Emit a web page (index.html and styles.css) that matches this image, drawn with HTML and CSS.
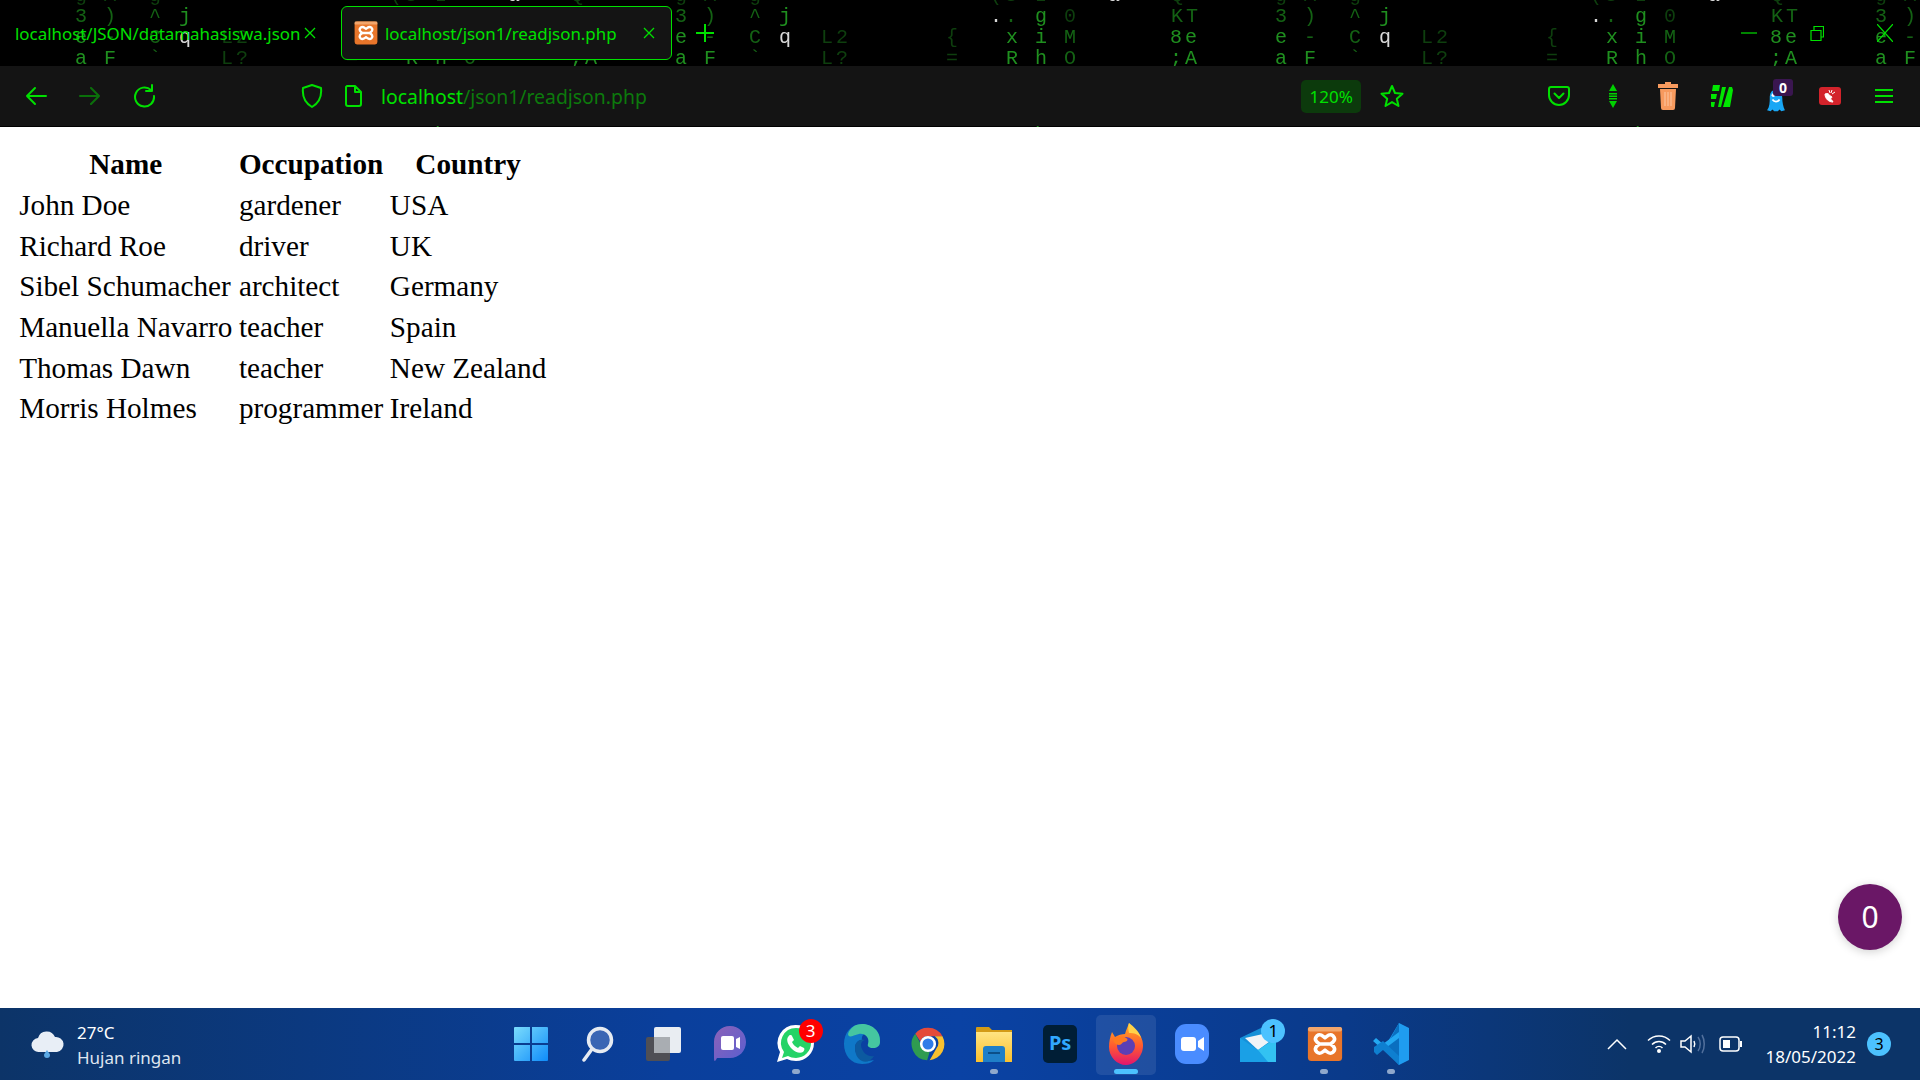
FILE: index.html
```html
<!DOCTYPE html>
<html lang="en">
<head>
    <meta charset="UTF-8">
    <title>localhost/json1/readjson.php</title>
    <link rel="stylesheet" href="styles.css">
</head>
<body>
    <svg class="defs" width="0" height="0">
        <defs>
            <linearGradient id="winGrad" x1="0" y1="0" x2="1" y2="1">
                <stop offset="0" stop-color="#7bdcfc"/>
                <stop offset="1" stop-color="#0f8cfa"/>
            </linearGradient>
            <linearGradient id="folderGrad" x1="0" y1="0" x2="0" y2="1">
                <stop offset="0" stop-color="#ffe482"/>
                <stop offset="1" stop-color="#fbc02d"/>
            </linearGradient>
            <linearGradient id="foxGrad" x1="0" y1="0" x2="0" y2="1">
                <stop offset="0" stop-color="#ffb020"/>
                <stop offset="0.55" stop-color="#ff5a30"/>
                <stop offset="1" stop-color="#e0156f"/>
            </linearGradient>
            <linearGradient id="teamsGrad" x1="0" y1="0" x2="1" y2="1">
                <stop offset="0" stop-color="#8c62b8"/>
                <stop offset="1" stop-color="#5a5fd0"/>
            </linearGradient>
            <symbol id="xampp" viewBox="0 0 40 40">
                <rect x="1" y="1" width="38" height="38" rx="4" fill="#e8752a"/>
                <rect x="1" y="1" width="38" height="5" rx="2" fill="#f2a66c"/>
                <path d="M11 11c4-3 6 0 9 2 3-2 5-5 9-2 4 4 0 7-3 9 3 2 7 5 3 9-4 3-6 0-9-2-3 2-5 5-9 2-4-4 0-7 3-9-3-2-7-5-3-9zM15 20h10" fill="none" stroke="#fff" stroke-width="4"/>
            </symbol>
            <!-- one tile of the wallpaper, repeats every 600px -->
            <g id="matrixTile" class="matrix-text">
                <text class="mx-faint" x="81 110 155 396 411 441 577" y="1">gAg(SIQ</text>
                <text class="mx-white" x="514" y="1">a</text>
                <text class="mx-dim" x="81 110 155 411 577 592" y="22">3)^.KT</text>
                <text class="mx-faint" x="470" y="22">0</text>
                <text class="mx-mid" x="185 441" y="22">jg</text>
                <text class="mx-white" x="396" y="22">.</text>
                <text class="mx-mid" x="81 412 441 576 591" y="43">exi8e</text>
                <text class="mx-dim" x="110 155 470" y="43">-CM</text>
                <text class="mx-faint" x="227 242 352" y="43">L2{</text>
                <text class="mx-white" x="185" y="43">q</text>
                <text class="mx-mid" x="81 110 412 441 576 591" y="64">aFRh;A</text>
                <text class="mx-dim" x="155 470" y="64">`O</text>
                <text class="mx-faint" x="227 242 352" y="64">L?=</text>
                <text class="mx-dim" x="81 110 155 227 242 352" y="141">eFCLL=</text>
                <text class="mx-mid" x="412 441 470 576 591" y="141">RhO;A</text>
            </g>
        </defs>
    </svg>

    <div class="browser">
        <svg class="matrix" width="1920" height="130">
            <use href="#matrixTile"/>
            <use href="#matrixTile" x="600"/>
            <use href="#matrixTile" x="1200"/>
            <use href="#matrixTile" x="1800"/>
        </svg>

        <div class="tabstrip">
            <div class="tab">
                <span class="tab-title">localhost/JSON/datamahasiswa.json</span>
                <svg class="tab-close" width="14" height="14" viewBox="0 0 14 14"><path d="M2 2l10 10M12 2L2 12"/></svg>
            </div>
            <div class="tab tab-active">
                <svg class="tab-icon" width="24" height="24"><use href="#xampp"/></svg>
                <span class="tab-title">localhost/json1/readjson.php</span>
                <svg class="tab-close" width="14" height="14" viewBox="0 0 14 14"><path d="M2 2l10 10M12 2L2 12"/></svg>
            </div>
            <svg class="new-tab" width="18" height="18" viewBox="0 0 18 18"><path d="M9 0v18M0 9h18"/></svg>
            <div class="window-controls">
                <div class="win-btn"><svg width="16" height="2" viewBox="0 0 16 2"><path d="M0 1h16"/></svg></div>
                <div class="win-btn"><svg width="14" height="16" viewBox="0 0 14 16"><path d="M1 5.500h10v10H1zM4 5V1.500h9.500V12H11"/></svg></div>
                <div class="win-btn"><svg width="16" height="18" viewBox="0 0 16 18"><path d="M0 0l16 18M16 0L0 18"/></svg></div>
            </div>
        </div>

        <div class="toolbar">
            <div class="tool-btn"><svg class="line-icon" width="22" height="22" viewBox="0 0 22 22"><path d="M21 11H2M10 3l-8 8 8 8"/></svg></div>
            <div class="tool-btn tool-off"><svg class="line-icon" width="22" height="22" viewBox="0 0 22 22"><path d="M1 11h19M12 3l8 8-8 8"/></svg></div>
            <div class="tool-btn"><svg class="line-icon" width="24" height="24" viewBox="0 0 24 24"><path d="M19 6a9.500 9.500 0 1 0 3 6M20 1v6h-6"/></svg></div>

            <div class="urlbar">
                <svg class="line-icon url-shield" width="22" height="26" viewBox="0 0 22 26"><path d="M11 2l9 3c1 9-2 15-9 19C4 20 1 14 2 5z"/></svg>
                <svg class="line-icon url-page" width="19" height="24" viewBox="0 0 19 24"><path d="M3 2h8l6 6v12a2 2 0 0 1-2 2H4a2 2 0 0 1-2-2V3zM11 2v6h6"/></svg>
                <span class="url-text"><span class="url-host">localhost</span>/json1/readjson.php</span>
            </div>

            <div class="zoom-box">120%</div>
            <div class="star-btn"><svg class="line-icon" width="24" height="24" viewBox="0 0 24 24"><path d="M12 2l3 7 7.500 .7-5.700 5 1.700 7.300-6.500-3.900L5.500 22l1.700-7.300-5.700-5L9 9z"/></svg></div>

            <div class="actions">
                <div class="action"><svg class="line-icon" width="22" height="22" viewBox="0 0 22 22"><path d="M3 2h16a2 2 0 0 1 2 2v6a10 10 0 0 1-20 0V4a2 2 0 0 1 2-2zM6.500 8.500l4.500 4.500 4.500-4.500"/></svg></div>
                <div class="action"><svg width="10" height="24" viewBox="0 0 10 24"><path fill="#00d000" d="M5 0l4 7H1zM1 9h8v1.500H1zM1 11.500h8V13H1zM1 14h8v1.500H1zM1 17h8l-4 7z"/></svg></div>
                <div class="action"><svg width="20" height="28" viewBox="0 0 20 28"><path fill="#f79a5e" d="M7 0h6v2h7v4H0V2h7zM2 7h16l-1 19a2 2 0 0 1-2 2H5a2 2 0 0 1-2-2z"/><path d="M7 10v14M10 10v14M13 10v14" stroke="#fcc8a4" stroke-width="1"/></svg></div>
                <div class="action"><svg width="24" height="24" viewBox="0 0 24 24"><path fill="#00e600" d="M3 1h7L9 7H2zM1 10h6l-1 5H1zM1 18h4l-1 5H2a1 1 0 0 1-1-1zM12 3h4l-5 20H8zM19 3h3l1 3-3 17h-7z"/></svg></div>
                <div class="action action-ghost">
                    <svg class="ghost" width="20" height="25" viewBox="0 0 22 28"><path fill="#19a7f5" d="M11 2c5 0 7 4 7 9 0 5 1 10 3 14l-4 1-2-2-2 2-4 0-2-2-2 2-4-1c3-4 3-9 3-14 0-5 2-9 7-9z"/><path d="M7 13c2 3 6 3 8 0" fill="none" stroke="#fff" stroke-width="2"/><circle cx="8" cy="8" r="2" fill="#fff"/></svg>
                    <span class="ghost-count">0</span>
                </div>
                <div class="action"><svg width="22" height="18" viewBox="0 0 22 18"><rect width="22" height="18" rx="3" fill="#d3232b"/><path d="M6 7c0 5 4 8 8 8-1-2-2-3-3-3 1-1 2-1 2-2l-3-2c0-1-1-2-4-1zM10 3l1 3M13 3l-1 3M16 5l-3 2" fill="#fff" stroke="#fff"/></svg></div>
                <div class="action"><svg class="line-icon menu-icon" width="18" height="16" viewBox="0 0 18 16"><path d="M0 2h18M0 8h18M0 14h18"/></svg></div>
            </div>
        </div>

        <div class="page">
            <table>
                <tr><th>Name</th><th>Occupation</th><th>Country</th></tr>
                <tr><td>John Doe</td><td>gardener</td><td>USA</td></tr>
                <tr><td>Richard Roe</td><td>driver</td><td>UK</td></tr>
                <tr><td>Sibel Schumacher</td><td>architect</td><td>Germany</td></tr>
                <tr><td>Manuella Navarro</td><td>teacher</td><td>Spain</td></tr>
                <tr><td>Thomas Dawn</td><td>teacher</td><td>New Zealand</td></tr>
                <tr><td>Morris Holmes</td><td>programmer</td><td>Ireland</td></tr>
            </table>
            <div class="fab">0</div>
        </div>
    </div>

    <div class="taskbar">
        <div class="weather">
            <svg width="36" height="30" viewBox="0 0 36 30">
                <path fill="#e8eef6" d="M9 23a7 7 0 0 1-1-14 9 9 0 0 1 17-1 7.500 7.500 0 0 1 2 15z"/>
                <path fill="#5aa9e6" d="M17 21c2 3 3 4 3 5a3 3 0 0 1-6 0c0-1 1-2 3-5z"/>
            </svg>
            <div class="weather-text">
                <div>27°C</div>
                <div class="weather-desc">Hujan ringan</div>
            </div>
        </div>

        <div class="apps">
            <div class="app"><svg width="36" height="36" viewBox="0 0 36 36"><path fill="url(#winGrad)" d="M1 2a1 1 0 0 1 1-1h15v16H1zM19 1h15a1 1 0 0 1 1 1v15H19zM1 19h16v16H2a1 1 0 0 1-1-1zM19 19h16v15a1 1 0 0 1-1 1H19z"/></svg></div>
            <div class="app"><svg width="36" height="36" viewBox="0 0 36 36"><circle cx="21" cy="14" r="11.500" fill="#3a66b4" stroke="#e6ebf2" stroke-width="3.500"/><path d="M13 23L5 34" stroke="#e6ebf2" stroke-width="3.500" stroke-linecap="round"/></svg></div>
            <div class="app"><svg width="38" height="36" viewBox="0 0 38 36"><rect x="1" y="11" width="24" height="24" rx="2" fill="#4f4f55"/><rect x="9" y="1" width="27" height="26" rx="2" fill="#e9edf2"/><rect x="9" y="11" width="16" height="16" fill="#a9adb2"/></svg></div>
            <div class="app"><svg width="34" height="38" viewBox="0 0 34 38"><path fill="url(#teamsGrad)" d="M17 1c9 0 16 7 16 16s-7 16-16 16H4c-2 4-3 4-3 0V17C1 8 8 1 17 1z"/><rect x="8" y="11" width="13" height="14" rx="2" fill="#fff"/><path fill="#fff" d="M23 14l4-2v12l-4-2z"/></svg></div>
            <div class="app app-open">
                <svg width="40" height="40" viewBox="0 0 40 40"><path fill="#fff" d="M20 1a18 18 0 0 1 0 36c-3 0-7-1-9-2L1 38l3-10A18 18 0 0 1 20 1z"/><path fill="#25d366" d="M20 4a15 15 0 0 1 0 30c-3 0-6-1-8-2l-6 2 2-6a15 15 0 0 1 12-24z"/><path fill="#fff" d="M14 11c1 0 2 0 2 1l2 4-2 2c1 3 4 5 6 6l2-2 4 2c1 1 0 3-1 4-3 2-8 0-11-3-4-4-6-9-4-12 1-1 1-2 2-2z"/></svg>
                <span class="badge badge-red">3</span>
            </div>
            <div class="app"><svg width="38" height="42" viewBox="0 0 38 42">
                <path fill="#0f78c8" d="M19 1C8 1 1 10 1 21c0 11 7 20 18 20 5 0 9-1 12-4-10 3-19-3-19-12 0-5 3-8 7-8-1-6 4-8 8-6 3 2 4 5 3 8h7c1-9-8-18-18-18z"/>
                <path fill="#45c6a0" d="M19 1c10 0 19 7 18 18 0 4-3 6-7 6-4 0-6-2-5-4 2-6-3-11-9-10C10 12 6 16 5 11 7 5 12 1 19 1z"/>
                <path fill="#0c5aa0" d="M12 25c0-6 5-10 10-8-4 1-5 5-3 9 2 5 7 8 12 7-3 5-8 7-12 5-5-2-7-8-7-13z"/>
            </svg></div>
            <div class="app"><svg width="34" height="38" viewBox="0 0 40 40">
                <path fill="#e44a3a" d="M20 1a19 19 0 0 1 17 10H20a9 9 0 0 0-9 6L5 8a19 19 0 0 1 15-7z"/>
                <path fill="#f9c02e" d="M37 11a19 19 0 0 1-15 28l8-14a9.500 9.500 0 0 0-2-14z"/>
                <path fill="#2f9c50" d="M5 8l8 15a9 9 0 0 0 9 6l-3 10A19 19 0 0 1 5 8z"/>
                <circle cx="20" cy="20" r="8" fill="#2f7be8" stroke="#fff" stroke-width="3"/>
            </svg></div>
            <div class="app app-open"><svg width="38" height="38" viewBox="0 0 38 38">
                <path fill="#d39b16" d="M1 3a1 1 0 0 1 1-1h12l3 3h20v8H1z"/>
                <path fill="url(#folderGrad)" d="M1 7h36v30H1z"/>
                <path fill="#1f7fc8" d="M8 24a3 3 0 0 1 3-3h16a3 3 0 0 1 3 3v13H8z"/>
                <path d="M13 28h12" stroke="#0c4f88" stroke-width="2"/>
            </svg></div>
            <div class="app"><div class="ps-icon">Ps</div></div>
            <div class="app app-active"><svg width="36" height="44" viewBox="0 0 36 44">
                <path fill="url(#foxGrad)" d="M4 10l3 5c3-2 7-3 10-3 1-4 3-8 4-11 2 5 8 7 11 12 3 5 4 11 2 17-3 8-9 13-16 13C9 43 1 35 1 25c0-5 1-10 3-15z"/>
                <path fill="#ffd24a" d="M21 1c5 4 10 8 12 15-3-4-7-5-12-5-1-4-1-7 0-10z"/>
                <circle cx="18" cy="24" r="9" fill="#5b3fb5"/>
                <path fill="#ff7a20" d="M5 17c5-3 10-3 13-1 3 1 1 4-2 4-2 0-2 3-5 3-3 0-6-3-6-6z"/>
            </svg></div>
            <div class="app"><svg width="34" height="42" viewBox="0 0 34 42"><rect y="1" width="34" height="40" rx="11" fill="#4a8cff"/><rect x="6" y="14" width="15" height="14" rx="3" fill="#fff"/><path fill="#fff" d="M23 18l6-4v14l-6-4z"/></svg></div>
            <div class="app">
                <svg width="38" height="40" viewBox="0 0 38 40"><path fill="#1690d8" d="M1 14L24 3l13 11v24H1z"/><path fill="#f1f4f7" d="M6 14l18-4 6 8-11 8z"/><path fill="#33c2f2" d="M37 14v24H16l3-12z"/><path fill="#1aa0e6" d="M1 14l18 12 10 12H1z"/></svg>
                <span class="badge badge-blue">1</span>
            </div>
            <div class="app app-open"><svg width="36" height="42"><use href="#xampp"/></svg></div>
            <div class="app app-open"><svg width="36" height="44" viewBox="0 0 36 44">
                <path fill="#1f9cf0" d="M26 1l10 5v32l-10 5-15-17z"/>
                <path fill="#0a6fc0" d="M26 1v42L11 26l4-5z"/>
                <path fill="#23a8f2" d="M26 10L10 22 3 16l-3 3 10 9 16-12z"/>
                <path fill="#0e7fd0" d="M1 25l9-6 16 15v9L10 28l-6 5-3-3z"/>
            </svg></div>
        </div>

        <div class="tray">
            <svg class="tray-icon tray-up" width="20" height="12" viewBox="0 0 20 12"><path d="M1 11l9-9 9 9"/></svg>
            <svg class="tray-icon tray-wifi" width="24" height="20" viewBox="0 0 24 20"><path d="M1 6.500c6-6 16-6 22 0M5 10.500c4-4 10-4 14 0M8.500 14c2-2 5-2 7 0"/><circle class="tray-fill" cx="12" cy="17" r="2"/></svg>
            <svg class="tray-icon tray-sound" width="26" height="20" viewBox="0 0 26 20"><path d="M1 7h4l6-5v16l-6-5H1zM14 7c1 2 1 4 0 6"/><path class="tray-dim" d="M18 3c3 4 3 10 0 14M22 1c3 5 3 13 0 18"/></svg>
            <svg class="tray-icon tray-batt" width="24" height="16" viewBox="0 0 24 16"><rect x="1" y="1" width="19" height="14" rx="3"/><rect class="tray-fill" x="4" y="4" width="7" height="8"/><path class="tray-fill" d="M21 5h2v6h-2z"/></svg>
            <div class="clock">
                <div>11:12</div>
                <div>18/05/2022</div>
            </div>
            <span class="notif">3</span>
        </div>
    </div>
</body>
</html>
```

FILE: styles.css
```css
/* pantalla completa */
html, body {
    margin: 0;
    height: 100%;
    overflow: hidden;
}
body {
    display: flex;
    flex-direction: column;
    width: 1920px;
    height: 1080px;
    background: #000;
    font-family: "Noto Sans", "Open Sans", sans-serif;
}
.defs {
    position: absolute;
}

/* ventana del navegador */
.browser {
    position: relative;
    flex: 1;
    display: flex;
    flex-direction: column;
    background: #000;
    min-height: 0;
}
.matrix {
    position: absolute;
    left: 0;
    top: 0;
    filter: blur(0.4px);
}
.matrix-text {
    font-family: "Liberation Mono", monospace;
    font-size: 20px;
    text-anchor: middle;
}
.mx-faint { fill: #0e3f0e; }
.mx-dim { fill: #146214; }
.mx-mid { fill: #1f8f1f; }
.mx-white { fill: #d8d8d8; }

.tabstrip {
    position: relative;
    display: flex;
    align-items: center;
    height: 66px;
    color: #00e000;
    font-size: 16.900px;
}
.tab {
    display: flex;
    align-items: center;
    width: 341px;
    height: 54px;
    padding-left: 15px;
    box-sizing: border-box;
}
.tab-active {
    width: 331px;
    padding-left: 12px;
    background: #141414;
    border: 1.5px solid #00e000;
    border-radius: 6px;
}
.tab-icon {
    margin-right: 7px;
}
.tab-title {
    white-space: nowrap;
}
.tab-close {
    margin-left: 3px;
    fill: none;
    stroke: #00e000;
    stroke-width: 1.3;
}
.tab-active .tab-close {
    margin-left: 25px;
}
.new-tab {
    margin-left: 24px;
    fill: none;
    stroke: #00e000;
    stroke-width: 2;
}
.window-controls {
    display: flex;
    margin-left: auto;
    margin-right: 1px;
}
.win-btn {
    display: flex;
    align-items: center;
    justify-content: center;
    width: 68px;
    height: 66px;
}
.win-btn svg {
    fill: none;
    stroke: #00e000;
    stroke-width: 1.2;
}

.toolbar {
    position: relative;
    display: flex;
    align-items: center;
    height: 60px;
    margin-bottom: 1px;
    padding: 0 8.500px 0 9px;
    background: #141414;
    color: #00e000;
}
.line-icon {
    fill: none;
    stroke: #00e000;
    stroke-width: 2;
    stroke-linejoin: round;
    stroke-linecap: round;
}
.tool-btn {
    display: flex;
    align-items: center;
    justify-content: center;
    width: 54px;
    height: 54px;
}
.tool-off {
    opacity: 0.45;
}
.urlbar {
    flex: 1;
    display: flex;
    align-items: center;
    margin-left: 130px;
}
.url-shield {
    margin-right: 21px;
}
.url-page {
    margin-right: 18px;
}
.url-text {
    font-size: 19.400px;
    color: #0c7a0c;
}
.url-host {
    color: #00e000;
}
.zoom-box {
    width: 60px;
    height: 33px;
    line-height: 33px;
    text-align: center;
    font-size: 17px;
    background: #0c3a0c;
    border-radius: 5px;
}
.star-btn {
    display: flex;
    justify-content: center;
    width: 62px;
}
.actions {
    display: flex;
    margin-left: 109px;
}
.action {
    position: relative;
    display: flex;
    align-items: center;
    justify-content: center;
    width: 54.200px;
    height: 54px;
}
.menu-icon {
    stroke-width: 2.200;
}
.ghost {
    margin-top: 8px;
}
.ghost-count {
    position: absolute;
    left: 24px;
    top: 10px;
    width: 20px;
    height: 17px;
    line-height: 17px;
    text-align: center;
    font-size: 14px;
    font-weight: 700;
    color: #fff;
    background: #3a1650;
    border-radius: 3px;
}

/* contenido */
.page {
    position: relative;
    flex: 1;
    padding: 15.400px 14.400px;
    background: #fff;
    color: #000;
    font-family: "Liberation Serif", serif;
    font-size: 29.200px;
    line-height: 34.100px;
}
table {
    border-spacing: 3.600px;
}
th, td {
    padding: 1.800px;
}
.fab {
    position: absolute;
    right: 18px;
    bottom: 58px;
    width: 64px;
    height: 66px;
    line-height: 66px;
    text-align: center;
    border-radius: 50%;
    background: #6a1766;
    color: #fff;
    font-family: "Noto Sans", sans-serif;
    font-size: 30px;
    box-shadow: 0 2px 10px rgba(0, 0, 0, 0.18);
}

/* barra de tareas */
.taskbar {
    display: grid;
    grid-template-columns: 1fr auto 1fr;
    align-items: center;
    height: 72px;
    background: linear-gradient(90deg, #0c3468 0%, #0a3f9c 35%, #0a42a4 50%, #0a3a8a 70%, #0c3468 85%);
    color: #fff;
    font-size: 17px;
}
.weather {
    display: flex;
    align-items: center;
    padding-left: 30px;
}
.weather svg {
    margin-right: 11px;
}
.weather-text {
    padding-top: 2px;
    line-height: 25px;
}
.weather-desc {
    color: #dfe6f0;
}
.apps {
    display: flex;
    margin-left: 2px;
}
.app {
    position: relative;
    display: flex;
    align-items: center;
    justify-content: center;
    width: 66.100px;
    height: 72px;
}
.app-open::after {
    content: "";
    position: absolute;
    left: 29px;
    bottom: 6px;
    width: 8px;
    height: 5px;
    border-radius: 3px;
    background: #8fa8cc;
}
.app-active::before {
    content: "";
    position: absolute;
    left: 3px;
    top: 7px;
    width: 60px;
    height: 60px;
    border-radius: 5px;
    background: rgba(255, 255, 255, 0.09);
}
.app-active::after {
    content: "";
    position: absolute;
    left: 21px;
    bottom: 6px;
    width: 24px;
    height: 5px;
    border-radius: 3px;
    background: #4cc2ff;
}
.app svg {
    position: relative;
}
.ps-icon {
    width: 34px;
    height: 38px;
    line-height: 36px;
    text-align: center;
    background: #001e36;
    border-radius: 5px;
    color: #31a8ff;
    font-size: 20px;
    font-weight: 700;
}
.badge {
    position: absolute;
    left: 36px;
    top: 11px;
    width: 24px;
    height: 24px;
    line-height: 24px;
    text-align: center;
    border-radius: 50%;
    font-size: 17px;
}
.badge-red {
    background: #f00;
    color: #fff;
}
.badge-blue {
    background: #4cc2ff;
    color: #000;
}
.tray {
    display: flex;
    align-items: center;
    justify-content: flex-end;
    padding-right: 29px;
}
.tray-icon {
    fill: none;
    stroke: #fff;
    stroke-width: 1.500;
}
.tray-up { margin-right: 20px; }
.tray-wifi { margin-right: 9px; }
.tray-sound { margin-right: 13px; }
.tray-batt { margin-right: 19px; }
.tray-fill {
    fill: #fff;
    stroke: none;
}
.tray-dim {
    stroke: #52709c;
}
.clock {
    margin-left: 4px;
    text-align: right;
    line-height: 25px;
}
.notif {
    width: 24px;
    height: 24px;
    line-height: 24px;
    margin-left: 11px;
    text-align: center;
    border-radius: 50%;
    background: #4cc2ff;
    color: #000;
    font-size: 16px;
}
```
